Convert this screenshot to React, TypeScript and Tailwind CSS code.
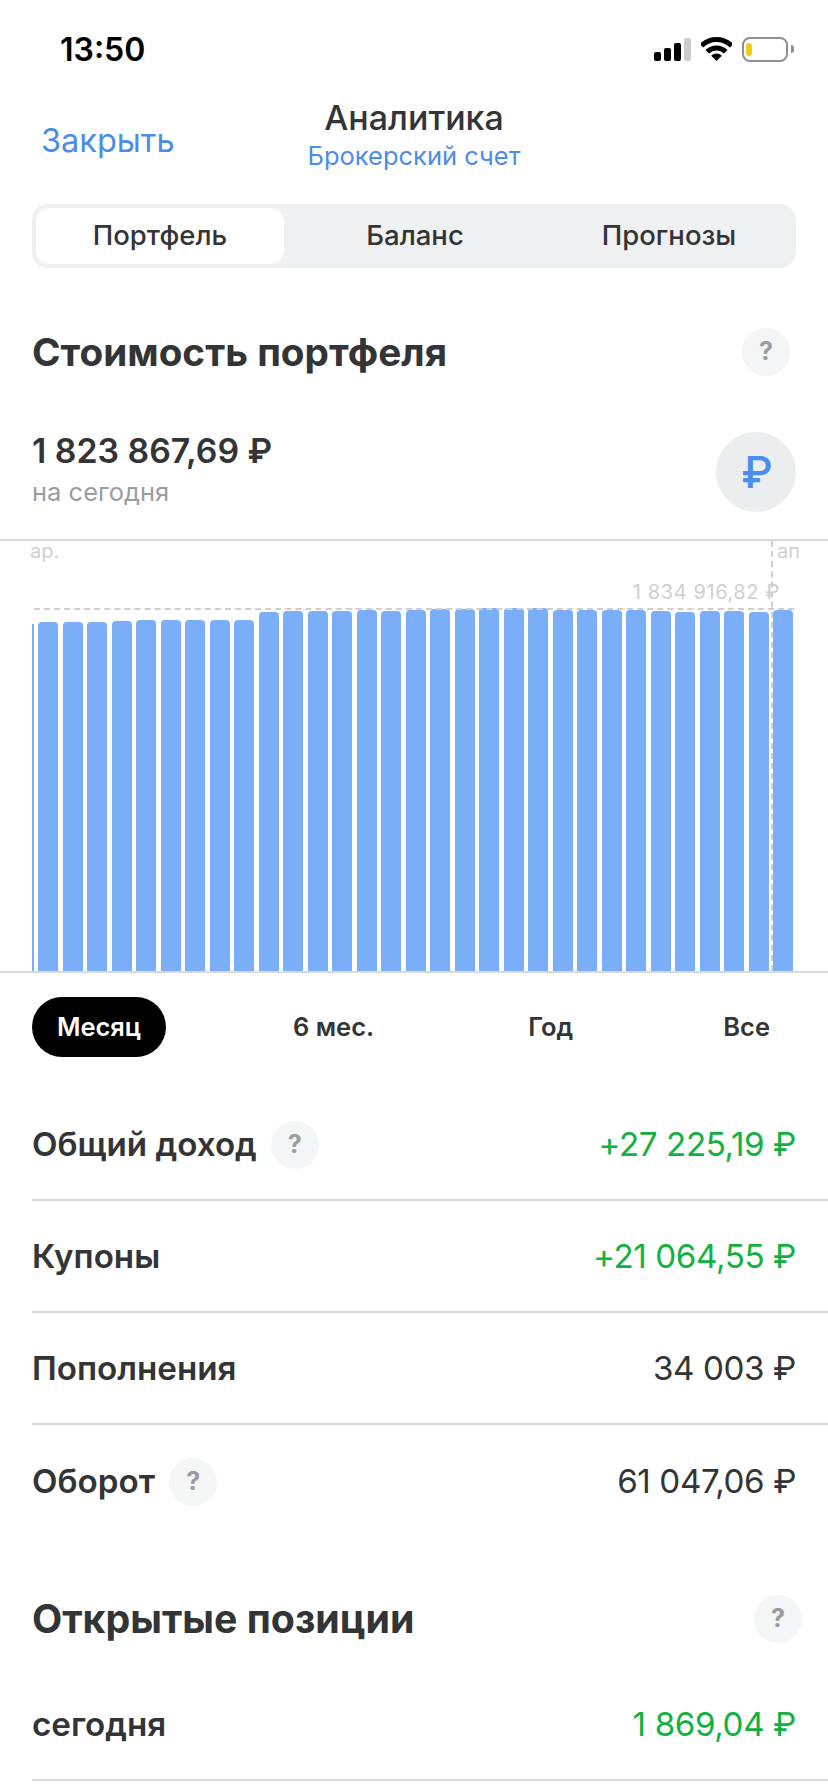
import { ReactNode } from "react";

const font = "font-['Inter','Liberation_Sans',sans-serif]";

// верх каждого столбика, px от верхней линии графика
const barTops = [
  83, 83, 83, 82, 81, 81, 81, 81, 81, 73, 72, 72, 72, 71, 72, 71, 70, 70, 69,
  69, 69, 71, 71, 71, 71, 72, 73, 72, 72, 73, 71,
];

const rows = [
  { label: "Общий доход", value: "+27 225,19 ₽", green: true, help: true },
  { label: "Купоны", value: "+21 064,55 ₽", green: true },
  { label: "Пополнения", value: "34 003 ₽" },
  { label: "Оборот", value: "61 047,06 ₽", help: true },
];

function Help() {
  return (
    <div className="flex h-12 w-12 items-center justify-center rounded-full bg-[#f4f5f7] text-[25px] font-bold text-[#9a9ca3]">
      ?
    </div>
  );
}

function Row({
  children,
  value,
  green,
  border = true,
}: {
  children: ReactNode;
  value: string;
  green?: boolean;
  border?: boolean;
}) {
  return (
    <div
      className={`flex h-[112px] items-center justify-between pr-[32px] pt-[2px] ${border ? "border-b-2 border-[#d9d9da]" : ""}`}
    >
      {children}
      <span
        className={`text-[33.2px] tracking-[-0.4px] ${green ? "text-[#12b13f]" : "text-[#333436]"}`}
      >
        {value}
      </span>
    </div>
  );
}

export default function App() {
  return (
    <div className={`h-[1792px] w-[828px] overflow-hidden bg-white ${font}`}>
      {/* статус бар */}
      <div className="flex h-[88px] items-center justify-between pl-[60px] pr-[34px] pt-[10px]">
        <span className="mt-[2px] text-[32px] font-semibold text-black">13:50</span>
        <div className="flex items-center gap-[10px]">
          <svg width="37" height="23" viewBox="0 0 37 23">
            <rect x="0" y="14" width="7" height="9" rx="2" fill="#000" />
            <rect x="10" y="10" width="7" height="13" rx="2" fill="#000" />
            <rect x="20" y="5" width="7" height="18" rx="2" fill="#000" />
            <rect x="30" y="0" width="7" height="23" rx="2" fill="#ccc" />
          </svg>
          <svg width="31" height="24" viewBox="0 0 31 24">
            <path d="M0.3 8.8a21.5 21.5 0 0 1 30.4 0" stroke="#000" strokeWidth="5" fill="none" />
            <path d="M6.3 14.8a13 13 0 0 1 18.4 0" stroke="#000" strokeWidth="5" fill="none" />
            <path d="M15.5 24l-5.3-5.3a7.5 7.5 0 0 1 10.6 0z" fill="#000" />
          </svg>
          <div className="flex items-center">
            <div className="flex h-[25px] w-[46px] items-center rounded-[8px] border-[2px] border-[#8f8f8f] p-[2px]">
              <div className="h-[13px] w-[6px] rounded-[3px] bg-[#f5c918]" />
            </div>
            <div className="ml-[3px] h-[8px] w-[3px] rounded-r-full bg-[#8f8f8f]" />
          </div>
        </div>
      </div>

      {/* шапка */}
      <div className="relative flex h-[100px] flex-col items-center pt-[10px]">
        <span className="absolute left-[41px] top-[29px] text-[32.5px] text-[#4a8ce8]">
          Закрыть
        </span>
        <span className="text-[34px] font-medium leading-[40px] text-[#333436]">
          Аналитика
        </span>
        <span className="mt-[2px] text-[25.5px] leading-[32px] text-[#4a8ce8]">
          Брокерский счет
        </span>
      </div>

      {/* вкладки */}
      <div className="mx-[32px] mt-[16px] flex h-[64px] rounded-[16px] bg-[#eef0f2] p-[4px] text-[27.5px] font-medium text-[#333436]">
        <div className="flex w-[248px] items-center justify-center rounded-[14px] bg-white">
          Портфель
        </div>
        <div className="flex w-[262px] items-center justify-center">Баланс</div>
        <div className="flex flex-1 items-center justify-center">Прогнозы</div>
      </div>

      {/* стоимость */}
      <div className="mt-[60px] flex items-center justify-between pl-[32px] pr-[38px]">
        <h2 className="text-[38.7px] font-bold leading-[48px] text-[#333436]">
          Стоимость портфеля
        </h2>
        <Help />
      </div>
      <div className="mt-[56px] flex items-center justify-between px-[32px]">
        <div className="-mt-[7px]">
          <div className="text-[33.8px] font-semibold leading-[40px] text-[#333436]">
            1 823 867,69 ₽
          </div>
          <div className="mt-[6px] text-[25.5px] leading-[30px] text-[#9b9ca0]">
            на сегодня
          </div>
        </div>
        <div className="flex h-[80px] w-[80px] items-center justify-center rounded-full bg-[#ecedef] pl-[2px] text-[44px] font-medium text-[#4a8ef0]">
          ₽
        </div>
      </div>

      {/* график */}
      <div className="relative mt-[27px] h-[434px] overflow-hidden border-y-2 border-[#d9d9da]">
        <div className="flex h-full items-end gap-[4.5px] pl-[38px]">
          {barTops.map((top, i) => (
            <div
              key={i}
              className="w-[20px] shrink-0 rounded-t-[4px] bg-[#7aaef9]"
              style={{ height: 432 - top }}
            />
          ))}
        </div>
        <div className="absolute bottom-0 left-[32px] top-[83px] w-[2px] bg-[#7aaef9]" />
        <span className="absolute left-[30px] top-0 text-[20px] leading-[20px] text-[#cfcfcf]">
          ар.
        </span>
        <span className="absolute left-[777px] top-0 text-[20px] leading-[20px] text-[#cfcfcf]">
          ап
        </span>
        <span className="absolute right-[48px] top-[36px] text-[20px] tracking-[0.6px] text-[#cfcfcf]">
          1 834 916,82 ₽
        </span>
        <div className="absolute left-[34px] right-[34px] top-[67px] border-t-2 border-dashed border-[#cfcfcf]" />
        <div className="absolute bottom-0 left-[771px] top-0 border-l-2 border-dashed border-[#cfcfcf]" />
      </div>

      {/* период */}
      <div className="mt-[24px] flex h-[60px] items-center pl-[32px] pr-[58px] text-[25.5px] font-semibold text-[#333436]">
        <div className="flex h-[60px] w-[134px] items-center justify-center rounded-full bg-black text-white">
          Месяц
        </div>
        <span className="ml-[127px]">6 мес.</span>
        <span className="ml-[154px]">Год</span>
        <span className="ml-auto">Все</span>
      </div>

      {/* показатели */}
      <div className="mt-[32px] pl-[32px]">
        {rows.map((r, i) => (
          <Row key={r.label} value={r.value} green={r.green} border={i < 3}>
            <div className="flex items-center gap-[14px]">
              <span className="text-[33.2px] font-semibold text-[#333436]">
                {r.label}
              </span>
              {r.help && <Help />}
            </div>
          </Row>
        ))}
      </div>

      {/* открытые позиции */}
      <div className="mt-[58px] flex items-center justify-between pl-[32px] pr-[26px]">
        <h2 className="text-[39.3px] font-bold leading-[48px] text-[#333436]">
          Открытые позиции
        </h2>
        <Help />
      </div>
      <div className="mt-[26px] pl-[32px]">
        <Row value="1 869,04 ₽" green>
          <span className="text-[33.2px] font-semibold text-[#333436]">сегодня</span>
        </Row>
      </div>
    </div>
  );
}
